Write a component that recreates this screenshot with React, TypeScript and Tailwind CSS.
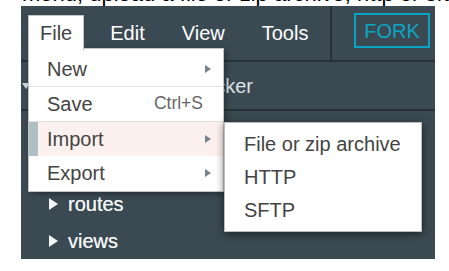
import React from "react";

const font = { fontFamily: '"Liberation Sans", Arial, sans-serif' };

function Arrow() {
  return <span className="w-0 h-0 border-y-[4px] border-y-transparent border-l-[6px] border-l-[#77848b]" />;
}

function TreeItem({ label }: { label: string }) {
  return (
    <div className="h-[37px] flex items-center pl-[28px] gap-[10px]">
      <span className="w-0 h-0 border-y-[6px] border-y-transparent border-l-[9px] border-l-[#f2f4f6]" />
      <span className="text-[20px] leading-none text-[#f2f4f6] [text-shadow:0_0_0.4px_#f2f4f6]">{label}</span>
    </div>
  );
}

export default function App() {
  return (
    <div className="bg-white w-[449px] h-[271px] overflow-hidden" style={font}>
      <div className="h-[6px] overflow-hidden">
        <div className="pl-[22px] -mt-[17px] text-[22px] leading-[22px] whitespace-nowrap text-black">
          menu, upload a file or zip archive, http or sftp.
        </div>
      </div>
      <div className="relative ml-[21px] w-[414px] h-[253px] bg-[#3b4a52]">
        {/* menu bar */}
        <div className="h-[56px] flex items-start border-b-2 border-[#263238]">
          <div className="relative z-20 ml-[7px] mt-[9px] h-[36px] px-[11px] pt-[6px] bg-white border border-b-0 border-[#c4c4c4] text-[20px] leading-[22px] text-[#424242]">
            File
          </div>
          <div className="flex gap-[15px] ml-[15px]">
            <div className="mt-[9px] pt-[7px] px-[11px] text-[20px] leading-[22px] text-white">Edit</div>
            <div className="mt-[9px] pt-[7px] px-[11px] text-[20px] leading-[22px] text-white">View</div>
            <div className="mt-[9px] pt-[7px] px-[11px] text-[20px] leading-[22px] text-white">Tools</div>
          </div>
          <div className="ml-auto w-[2px] self-stretch bg-[#263238]" />
          <div className="ml-[22px] mr-[5px] mt-[7px] w-[76px] h-[35px] border-2 border-[#06a3c4] flex items-center justify-center text-[20px] text-[#0aa6c6]">
            FORK
          </div>
        </div>
        {/* second row */}
        <div className="h-[49px] flex items-center border-b-2 border-[#263238]">
          <span className="ml-[1px] w-0 h-0 border-x-[4px] border-x-transparent border-t-[6px] border-t-[#cfd8dc]" />
          <span className="w-[223px] text-right text-[20px] leading-none text-[#dde3e6] whitespace-nowrap">app-docker</span>
        </div>
        {/* tree */}
        <TreeItem label="bin" />
        <TreeItem label="public" />
        <TreeItem label="routes" />
        <TreeItem label="views" />

        {/* File dropdown */}
        <div className="absolute z-10 left-[7px] top-[42px] w-[196px] bg-white border border-[#c4c4c4] pt-[3px] pb-[1px] shadow-[2px_2px_6px_rgba(0,0,0,0.35)] text-[20px] text-[#444] leading-none">
          <div className="h-[34px] flex items-center justify-between pl-[18px] pr-[12px]">
            <span>New</span>
            <Arrow />
          </div>
          <div className="h-[1px] bg-[#e0e0e0]" />
          <div className="h-[34px] flex items-center justify-between pl-[18px] pr-[20px]">
            <span>Save</span>
            <span className="text-[17.5px] text-[#666]">Ctrl+S</span>
          </div>
          <div className="h-[1px] bg-[#e0e0e0]" />
          <div className="h-[34px] flex items-center justify-between pl-[9px] pr-[12px] bg-[#fdf1ef] border-l-[9px] border-[#b0bec5]">
            <span>Import</span>
            <Arrow />
          </div>
          <div className="h-[34px] flex items-center justify-between pl-[18px] pr-[12px]">
            <span>Export</span>
            <Arrow />
          </div>
        </div>

        {/* Import submenu */}
        <div className="absolute z-30 left-[203px] top-[116px] w-[198px] h-[110px] bg-white border border-[#bdbdbd] pt-[4px] shadow-[0_2px_8px_rgba(0,0,0,0.55)] text-[20px] text-[#444] leading-none">
          <div className="h-[33px] flex items-center pl-[19px] whitespace-nowrap">File or zip archive</div>
          <div className="h-[33px] flex items-center pl-[19px]">HTTP</div>
          <div className="h-[33px] flex items-center pl-[19px]">SFTP</div>
        </div>
      </div>
    </div>
  );
}
